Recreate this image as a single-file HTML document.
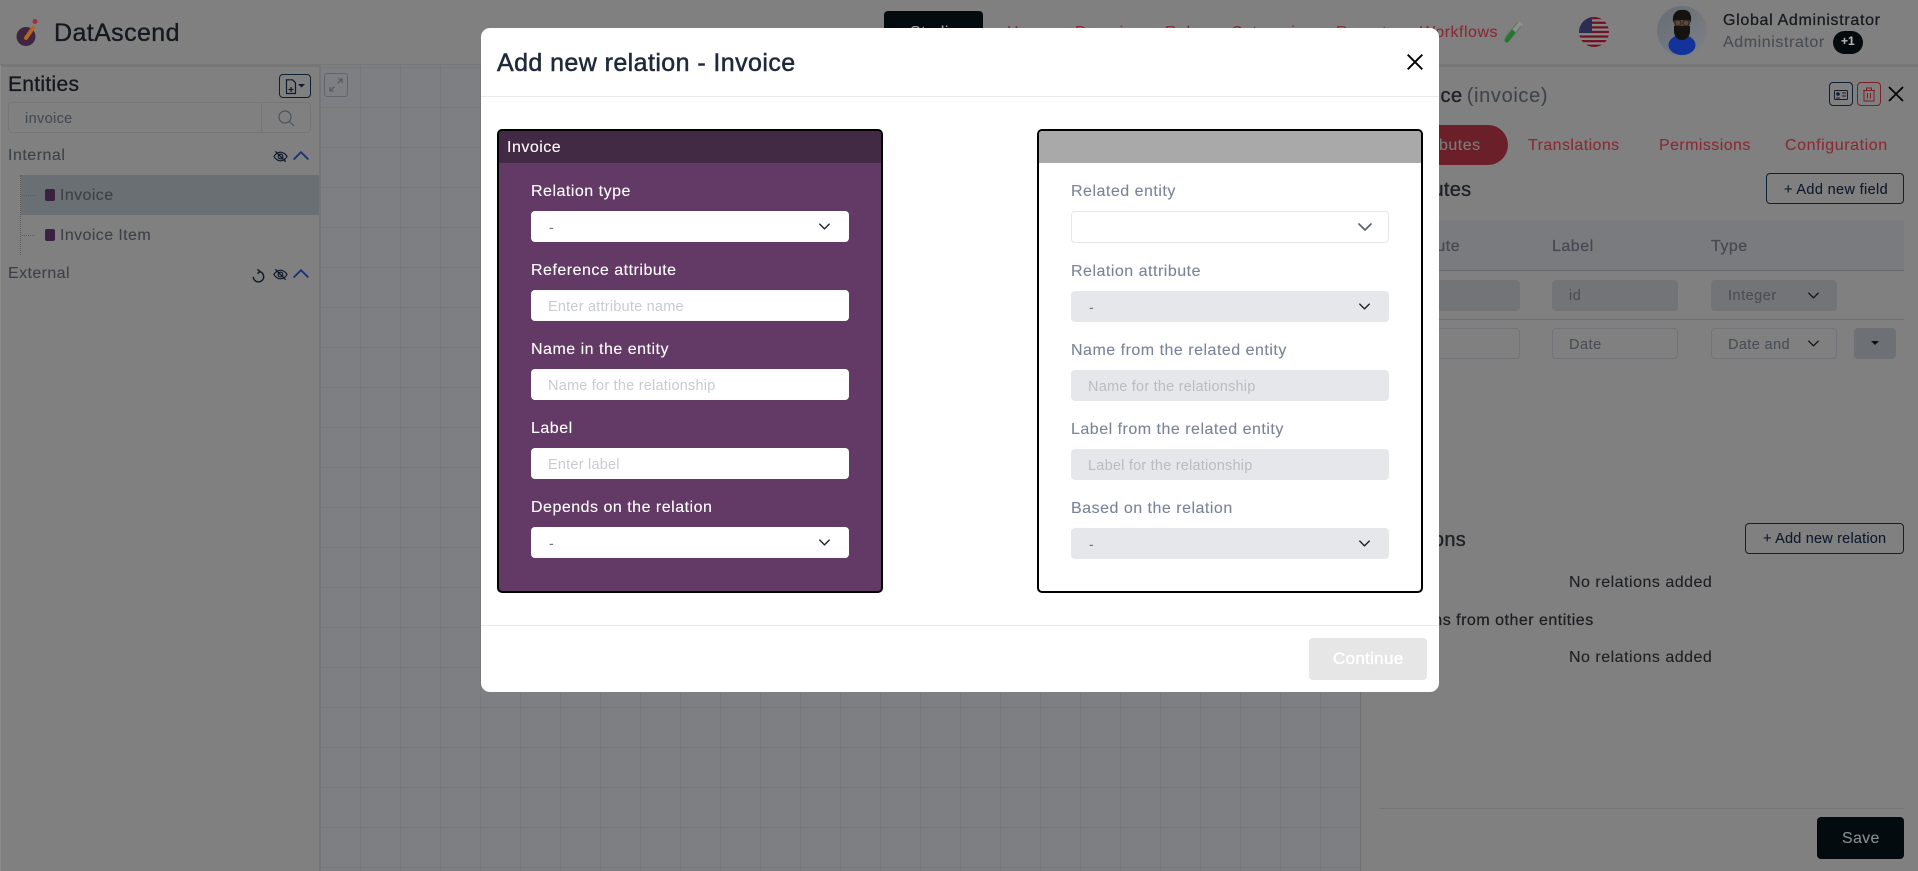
<!DOCTYPE html>
<html><head><meta charset="utf-8"><title>DatAscend</title>
<style>
html,body{margin:0;padding:0;width:1918px;height:871px;overflow:hidden;background:#808080;font-family:"Liberation Sans",sans-serif}
body{position:relative}
.a{position:absolute;box-sizing:border-box}
.t{position:absolute;white-space:nowrap;line-height:20px;font-size:16px;letter-spacing:.5px;-webkit-text-stroke:.1px currentColor}
.m{-webkit-text-stroke:.35px currentColor}
svg{position:absolute;overflow:visible;fill:none}
.w{color:#fff}.g{color:#7a8499}
.ph{font-size:14.5px;color:#c8cbd0;letter-spacing:.22px;-webkit-text-stroke:0}
.phd{font-size:14.5px;color:#b9bcc2;letter-spacing:.22px;-webkit-text-stroke:0}
.r{color:#8a2a35}
.f{background:#fff;border-radius:4px;height:31px;width:318px}
.d{background:#e5e7ea;border-radius:4px;height:31px;width:318px}
</style></head><body>
<svg width="0" height="0" style="position:absolute"><defs>
<symbol id="ch" viewBox="0 0 14 8"><path d="M1 1l6 6 6-6" fill="none" stroke="currentColor" stroke-width="1.7" stroke-linecap="round" stroke-linejoin="round"/></symbol>
<symbol id="eye" viewBox="0 0 16 16"><path d="M1 8s2.7-4.6 7-4.6S15 8 15 8s-2.7 4.6-7 4.6S1 8 1 8z" fill="none" stroke="#101a2c" stroke-width="1.3"/><circle cx="8" cy="8" r="2.5" fill="none" stroke="#101a2c" stroke-width="1.3"/><path d="M2.5 2.5l11 11" stroke="#101a2c" stroke-width="1.4"/></symbol>
</defs></svg>

<!-- header -->
<div class="a" style="left:0;top:64px;width:1918px;height:3px;background:#777"></div>
<svg style="left:0;top:0" width="60" height="60"><circle cx="26" cy="36.500" r="9.500" fill="#3e2540"/><path d="M26 38l7-10" stroke="#b5651d" stroke-width="4" stroke-linecap="round"/><circle cx="35" cy="21.500" r="2.500" fill="#a52f3e"/></svg>
<div class="t m" style="left:54px;top:23px;font-size:25px;color:#14181f;letter-spacing:.4px">DatAscend</div>
<div class="a" style="left:884px;top:11px;width:99px;height:50px;background:#030b0f;border-radius:4px"></div>
<div class="t" style="left:910px;top:23px;color:#aaa">Studio</div>
<div class="t r" style="left:1007px;top:23px">Home</div>
<div class="t r" style="left:1075px;top:23px">Domains</div>
<div class="t r" style="left:1165px;top:23px">Roles</div>
<div class="t r" style="left:1231px;top:23px">Categories</div>
<div class="t r" style="left:1336px;top:23px">Reports</div>
<div class="t r" style="left:1420px;top:23px">Workflows</div>
<svg style="left:1502px;top:20px" width="22" height="24"><path d="M5 20L13 10" stroke="#1f7a2a" stroke-width="5" stroke-linecap="round"/><path d="M12 11l7-8" stroke="#8b918b" stroke-width="5"/><path d="M3.500 17L16 2M7 21L19 6" stroke="#5f6b60" stroke-width=".8"/></svg>
<svg style="left:1579px;top:17px" width="30" height="30"><defs><clipPath id="fc"><circle cx="15" cy="15" r="15"/></clipPath></defs><g clip-path="url(#fc)"><rect width="30" height="30" fill="#888"/><rect y="0" width="30" height="2.300" fill="#6f1424"/><rect y="4.600" width="30" height="2.300" fill="#6f1424"/><rect y="9.200" width="30" height="2.300" fill="#6f1424"/><rect y="13.800" width="30" height="2.300" fill="#6f1424"/><rect y="18.400" width="30" height="2.300" fill="#6f1424"/><rect y="23" width="30" height="2.300" fill="#6f1424"/><rect y="27.600" width="30" height="2.400" fill="#6f1424"/><rect width="13" height="16" fill="#2b2d52"/></g></svg>
<svg style="left:1657px;top:6px" width="50" height="50"><defs><linearGradient id="av" x1="0" y1="0" x2="1" y2="1"><stop offset="0" stop-color="#666c73"/><stop offset="1" stop-color="#7d8288"/></linearGradient></defs><circle cx="25" cy="25" r="25" fill="url(#av)"/><ellipse cx="25" cy="39" rx="13.500" ry="10" fill="#12349a"/><rect x="21" y="26" width="8" height="7" fill="#3a2a20"/><path d="M16 15c-1-7 4-12 9-11 6-1 10 3 9 11l-1 2H17z" fill="#15130f"/><rect x="17" y="14" width="16" height="10" rx="2" fill="#5e4a3a"/><path d="M17 20h16v5c0 5-3 9-8 9s-8-4-8-9z" fill="#15130f"/><circle cx="21" cy="17" r="3" fill="none" stroke="#2a231d"/><circle cx="29" cy="17" r="3" fill="none" stroke="#2a231d"/></svg>
<div class="t m" style="left:1723px;top:11px;color:#16191f;letter-spacing:.68px;-webkit-text-stroke:.25px">Global Administrator</div>
<div class="t" style="left:1723px;top:33px;color:#474c55;letter-spacing:.58px">Administrator</div>
<div class="a" style="left:1833px;top:31px;width:30px;height:23px;border-radius:12px;background:#030b0f"></div>
<div class="t" style="left:1841px;top:31px;font-size:12px;font-weight:bold;color:#b5b5b5;letter-spacing:0">+1</div>

<!-- left panel -->
<div class="a" style="left:0;top:65px;width:1px;height:806px;background:#8c8c8c"></div>
<div class="t m" style="left:8px;top:75px;font-size:21px;color:#15191f;letter-spacing:.3px">Entities</div>
<div class="a" style="left:279px;top:74px;width:32px;height:24px;border:1.5px solid #0d2036;border-radius:4px"></div>
<svg style="left:285px;top:79px" width="22" height="16"><path d="M1.500 .8h6l3 3V14.500h-9z M3.500 10.500h5 M6 8v5" stroke="#0f1a2c" stroke-width="1.200"/><path d="M13 5h7l-3.500 3.500z" fill="#0f1a2c"/></svg>
<div class="a" style="left:8px;top:102px;width:303px;height:31px;border:1px solid #767676;border-radius:4px"></div>
<div class="a" style="left:261px;top:102px;width:1px;height:31px;background:#767676"></div>
<div class="t" style="left:25px;top:109px;font-size:14.500px;color:#454a52;letter-spacing:.35px">invoice</div>
<svg style="left:278px;top:110px" width="17" height="17" stroke="#4d535c" stroke-width="1.200"><circle cx="7" cy="7" r="6"/><path d="M11.500 11.500L16 16"/></svg>
<div class="t" style="left:8px;top:146px;color:#3c4148">Internal</div>
<svg style="left:273px;top:149px;color:#000" width="15" height="15"><use href="#eye"/></svg>
<svg style="left:293px;top:151px;color:#1d2f7a" width="16" height="9"><use href="#ch" transform="matrix(1 0 0 -1 0 9)"/></svg>
<div class="a" style="left:21px;top:175px;width:298px;height:40px;background:#6a6f73"></div>
<div class="a" style="left:20px;top:175px;height:80px;border-left:1px dotted #5c5c5c"></div>
<div class="a" style="left:22px;top:195px;width:13px;border-top:1px dotted #5c5c5c"></div>
<div class="a" style="left:22px;top:235px;width:13px;border-top:1px dotted #5c5c5c"></div>
<div class="a" style="left:45px;top:189px;width:10px;height:12px;background:#3a2140;border-radius:2px"></div>
<div class="a" style="left:45px;top:229px;width:10px;height:12px;background:#3a2140;border-radius:2px"></div>
<div class="t" style="left:60px;top:186px;color:#3c4148;letter-spacing:.4px">Invoice</div>
<div class="t" style="left:60px;top:226px;color:#3c4148;letter-spacing:.4px">Invoice Item</div>
<div class="t" style="left:8px;top:264px;color:#3c4148;letter-spacing:.4px">External</div>
<svg style="left:252px;top:269px" width="13" height="14" stroke="#101a2c" stroke-width="1.400"><path d="M6.500 2.500A5.200 5.200 0 1 1 1.300 7.700"/><path d="M5.500 .3l2.500 2.200-2.500 2.200"/></svg>
<svg style="left:273px;top:267px" width="15" height="15"><use href="#eye"/></svg>
<svg style="left:293px;top:269px;color:#1d2f7a" width="16" height="9"><use href="#ch" transform="matrix(1 0 0 -1 0 9)"/></svg>
<div class="a" style="left:319px;top:65px;width:2px;height:806px;background:#747578"></div>

<!-- canvas -->
<div class="a" style="left:321px;top:65px;width:1039px;height:806px;background-color:#7e7f82;background-image:linear-gradient(to right,transparent 39px,#77787c 39px),linear-gradient(to bottom,transparent 39px,#77787c 39px);background-size:40px 40px;background-position:0 3px"></div>
<div class="a" style="left:324px;top:73px;width:24px;height:24px;border:1px solid #5f6570;border-radius:3px;background:#7e7f82"></div>
<svg style="left:329px;top:78px" width="14" height="14" stroke="#4f5660" stroke-width="1.100"><path d="M8.500 5.500L13 1M9 1h4v4M5.500 8.500L1 13M1 9v4h4"/></svg>

<!-- right panel -->
<div class="a" style="left:1360px;top:65px;width:1px;height:806px;background:#6f7073"></div>
<div class="t m" style="left:1396px;top:86px;font-size:20px;color:#1d2127;letter-spacing:.45px">Invoice<span style="color:#3f444b;-webkit-text-stroke:.1px #3f444b;margin-left:-2px;letter-spacing:.65px"> (invoice)</span></div>
<div class="a" style="left:1829px;top:82px;width:24px;height:24px;border:1.500px solid #0d2036;border-radius:4px"></div>
<svg style="left:1834px;top:90px" width="14" height="10" stroke="#131d2b" stroke-width="1"><rect x=".5" y=".5" width="13" height="9" rx="1"/><circle cx="4" cy="4" r="1.300" fill="#131d2b"/><path d="M2 8h4M8 3h4M8 6h4"/></svg>
<div class="a" style="left:1857px;top:82px;width:24px;height:24px;border:1.500px solid #7d1f27;border-radius:4px"></div>
<svg style="left:1862px;top:87px" width="14" height="15" stroke="#7d1f27" stroke-width="1"><path d="M1 3.500h12M4.500 3.500V1h5v2.500M2 3.500V14h10V3.500M5.500 6v5.500M8.500 6v5.500"/></svg>
<svg style="left:1888px;top:86px" width="16" height="16" stroke="#000" stroke-width="1.700"><path d="M1 1l14 14M15 1L1 15"/></svg>
<div class="a" style="left:1380px;top:125px;width:128px;height:40px;background:#6b2029;border-radius:20px"></div>
<div class="t" style="left:1408px;top:136px;color:#7d7d7d">Attributes</div>
<div class="t r" style="left:1528px;top:136px;letter-spacing:.42px">Translations</div>
<div class="t r" style="left:1659px;top:136px;letter-spacing:.42px">Permissions</div>
<div class="t r" style="left:1785px;top:136px;letter-spacing:.58px">Configuration</div>
<div class="t m" style="left:1384px;top:180px;font-size:20px;color:#1d2127;letter-spacing:.3px">Attributes</div>
<div class="a" style="left:1766px;top:173px;width:138px;height:31px;border:1.500px solid #0d2036;border-radius:4px"></div>
<div class="t" style="left:1784px;top:180px;font-size:14.500px;color:#0e1a2c;letter-spacing:.35px">+ Add new field</div>
<div class="a" style="left:1380px;top:220px;width:524px;height:51px;background:#797b7f;border-bottom:1px solid #66696e"></div>
<div class="t" style="left:1396px;top:237px;color:#454a52;-webkit-text-stroke:.25px">Attribute</div>
<div class="t" style="left:1552px;top:237px;color:#454a52;-webkit-text-stroke:.25px">Label</div>
<div class="t" style="left:1711px;top:237px;color:#454a52;-webkit-text-stroke:.25px">Type</div>
<div class="a" style="left:1380px;top:319px;width:524px;height:1px;background:#6f7074"></div>
<div class="a" style="left:1395px;top:280px;width:125px;height:31px;background:#727477;border-radius:4px"></div>
<div class="a" style="left:1552px;top:280px;width:126px;height:31px;background:#727477;border-radius:4px"></div>
<div class="a" style="left:1711px;top:280px;width:126px;height:31px;background:#727477;border-radius:4px"></div>
<div class="t" style="left:1569px;top:286px;font-size:14.500px;color:#494e56">id</div>
<div class="t" style="left:1728px;top:286px;font-size:14.500px;color:#494e56">Integer</div>
<svg style="left:1808px;top:292px;color:#15191f" width="11" height="7"><use href="#ch"/></svg>
<div class="a" style="left:1395px;top:328px;width:125px;height:31px;border:1px solid #717478;border-radius:4px"></div>
<div class="a" style="left:1552px;top:328px;width:126px;height:31px;border:1px solid #717478;border-radius:4px"></div>
<div class="a" style="left:1711px;top:328px;width:126px;height:31px;border:1px solid #717478;border-radius:4px"></div>
<div class="t" style="left:1569px;top:335px;font-size:14.500px;color:#494e56">Date</div>
<div class="t" style="left:1728px;top:335px;font-size:14.500px;color:#494e56;letter-spacing:.38px">Date and</div>
<svg style="left:1808px;top:340px;color:#15191f" width="11" height="7"><use href="#ch"/></svg>
<div class="a" style="left:1854px;top:328px;width:42px;height:31px;background:#6d7175;border-radius:4px"></div>
<svg style="left:1871px;top:341px" width="8" height="5"><path d="M0 0h8L4 4z" fill="#0b0f14"/></svg>
<div class="t m" style="left:1380px;top:530px;font-size:20px;color:#1d2127;letter-spacing:.3px">Relations</div>
<div class="a" style="left:1745px;top:523px;width:159px;height:31px;border:1.500px solid #0d2036;border-radius:4px"></div>
<div class="t" style="left:1763px;top:529px;font-size:14.500px;color:#0e1a2c;letter-spacing:.2px">+ Add new relation</div>
<div class="t" style="left:1569px;top:573px;color:#1c1e21">No relations added</div>
<div class="t m" style="left:1380px;top:611px;color:#1c1e21;-webkit-text-stroke:.25px">Relations from other entities</div>
<div class="t" style="left:1569px;top:648px;color:#1c1e21">No relations added</div>
<div class="a" style="left:1380px;top:808px;width:524px;height:1px;background:#747474"></div>
<div class="a" style="left:1817px;top:817px;width:87px;height:42px;background:#030b0f;border-radius:4px"></div>
<div class="t" style="left:1842px;top:829px;color:#8a8d8f;letter-spacing:.3px">Save</div>

<!-- modal -->
<div class="a" style="left:481px;top:28px;width:958px;height:664px;background:#fff;border-radius:9px">
<div class="a" style="left:0;top:68px;width:958px;height:1px;background:#e8eaed"></div>
<div class="a" style="left:0;top:597px;width:958px;height:1px;background:#e8eaed"></div>
</div>
<div class="t m" style="left:497px;top:53px;font-size:25px;color:#1e293b;letter-spacing:.42px;-webkit-text-stroke:.5px #1e293b">Add new relation - Invoice</div>
<svg style="left:1407px;top:54px" width="16" height="16" stroke="#000" stroke-width="1.900"><path d="M.7.7l14.600 14.600M15.300.7L.7 15.300"/></svg>
<div class="a" style="left:497px;top:129px;width:386px;height:464px;border:2px solid #000;border-radius:5px;background:#623a65;overflow:hidden"><div style="height:32px;background:#422944"></div></div>
<div class="t w" style="left:507px;top:138px">Invoice</div>
<div class="t w" style="left:531px;top:182px">Relation type</div>
<div class="a f" style="left:531px;top:211px"></div>
<div class="t" style="left:549px;top:217px;color:#777;font-size:14px">-</div>
<svg style="left:819px;top:223px;color:#1b1f27" width="11" height="7"><use href="#ch"/></svg>
<div class="t w" style="left:531px;top:261px">Reference attribute</div>
<div class="a f" style="left:531px;top:290px"></div>
<div class="t ph" style="left:548px;top:297px">Enter attribute name</div>
<div class="t w" style="left:531px;top:340px">Name in the entity</div>
<div class="a f" style="left:531px;top:369px"></div>
<div class="t ph" style="left:548px;top:376px">Name for the relationship</div>
<div class="t w" style="left:531px;top:419px">Label</div>
<div class="a f" style="left:531px;top:448px"></div>
<div class="t ph" style="left:548px;top:455px">Enter label</div>
<div class="t w" style="left:531px;top:498px">Depends on the relation</div>
<div class="a f" style="left:531px;top:527px"></div>
<div class="t" style="left:549px;top:533px;color:#777;font-size:14px">-</div>
<svg style="left:819px;top:539px;color:#1b1f27" width="11" height="7"><use href="#ch"/></svg>

<div class="a" style="left:1037px;top:129px;width:386px;height:464px;border:2px solid #000;border-radius:5px;background:#fff;overflow:hidden"><div style="height:32px;background:#a9a9a9"></div></div>
<div class="t g" style="left:1071px;top:182px">Related entity</div>
<div class="a f" style="left:1071px;top:211px;border:1px solid #e5e7eb;height:32px"></div>
<svg style="left:1358px;top:223px;color:#5b616b" width="14" height="8"><use href="#ch"/></svg>
<div class="t g" style="left:1071px;top:262px">Relation attribute</div>
<div class="a d" style="left:1071px;top:291px"></div>
<div class="t" style="left:1089px;top:297px;color:#777;font-size:14px">-</div>
<svg style="left:1359px;top:303px;color:#1b1f27" width="11" height="7"><use href="#ch"/></svg>
<div class="t g" style="left:1071px;top:341px">Name from the related entity</div>
<div class="a d" style="left:1071px;top:370px"></div>
<div class="t phd" style="left:1088px;top:377px">Name for the relationship</div>
<div class="t g" style="left:1071px;top:420px">Label from the related entity</div>
<div class="a d" style="left:1071px;top:449px"></div>
<div class="t phd" style="left:1088px;top:456px">Label for the relationship</div>
<div class="t g" style="left:1071px;top:499px">Based on the relation</div>
<div class="a d" style="left:1071px;top:528px"></div>
<div class="t" style="left:1089px;top:534px;color:#777;font-size:14px">-</div>
<svg style="left:1359px;top:540px;color:#1b1f27" width="11" height="7"><use href="#ch"/></svg>
<div class="a" style="left:1309px;top:638px;width:118px;height:42px;background:#e6e6e6;border-radius:4px"></div>
<div class="t m" style="left:1333px;top:649px;color:#fff;letter-spacing:.3px;font-size:17px">Continue</div>
</body></html>
